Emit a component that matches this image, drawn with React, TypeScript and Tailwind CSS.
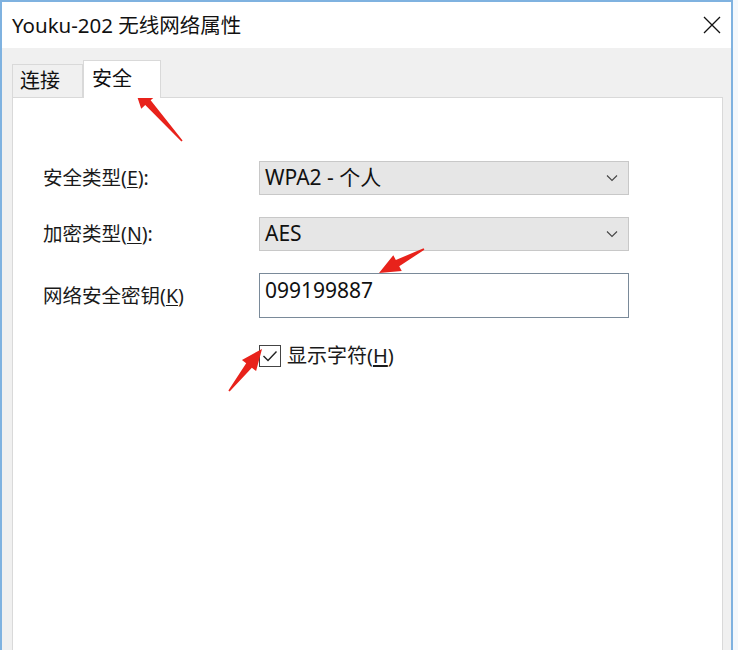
const font = {
  fontFamily: '"Noto Sans", "Noto Sans CJK SC", sans-serif',
};

type Pt = [number, number];

// tapered red annotation arrow, thin at the tail, head at the tip
const arrowPoints = (tail: Pt, tip: Pt) => {
  const dx = tip[0] - tail[0];
  const dy = tip[1] - tail[1];
  const len = Math.hypot(dx, dy);
  const ux = dx / len;
  const uy = dy / len;
  const nx = -uy;
  const ny = ux;
  const headLen = 21;
  const base: Pt = [tip[0] - ux * headLen, tip[1] - uy * headLen];
  const at = (p: Pt, w: number): string =>
    `${p[0] + nx * w},${p[1] + ny * w}`;
  return [
    at(tail, 0.8),
    at(base, 3.6),
    at(base, 9),
    `${tip[0]},${tip[1]}`,
    at(base, -9),
    at(base, -3.6),
    at(tail, -0.8),
  ].join(' ');
};

const arrows: { tail: Pt; tip: Pt }[] = [
  { tail: [182, 141], tip: [134, 87] },
  { tail: [424, 249], tip: [379, 273] },
  { tail: [229, 391], tip: [262, 349] },
];

const Chevron = () => (
  <svg width="12" height="8" viewBox="0 0 12 8" className="mr-[10px]">
    <path d="M1 1.5 L6 6.5 L11 1.5" fill="none" stroke="#444" strokeWidth="1.1" />
  </svg>
);

const Select = ({ value }: { value: string }) => (
  <div className="flex h-[34px] w-[370px] items-center justify-between border border-[#c8c8c8] bg-[#e6e6e6] pl-[5px]">
    <span className="text-[21px] text-[#111]">{value}</span>
    <Chevron />
  </div>
);

const Label = ({ text, keyChar, colon }: { text: string; keyChar: string; colon?: boolean }) => (
  <div className="w-[216px] text-[19.5px] text-[#1a1a1a]">
    {text}(<span className="underline underline-offset-2">{keyChar}</span>){colon ? ':' : ''}
  </div>
);

export default function App() {
  return (
    <div className="relative h-[650px] w-[738px] overflow-hidden bg-[#f4f8fc]" style={font}>
      <div className="flex h-[660px] w-[733px] flex-col border-x-2 border-t-2 border-[#7fb2e0] bg-[#f0f0f0]">
        <div className="flex h-[46px] shrink-0 items-center justify-between bg-white pl-[10px] pr-[10px]">
          <span className="text-[20.5px] text-[#111]">Youku-202 无线网络属性</span>
          <svg width="18" height="18" viewBox="0 0 18 18">
            <path d="M1 1 L17 17 M17 1 L1 17" stroke="#111" strokeWidth="1.3" />
          </svg>
        </div>

        <div className="flex flex-1 flex-col pl-[10px] pr-[8px] pt-[12px]">
          <div className="flex items-end">
            <div className="flex h-[33px] w-[71px] items-center border border-b-0 border-[#d9d9d9] bg-[#f0f0f0] pl-[7px] text-[20px] text-[#111]">
              连接
            </div>
            <div className="relative z-10 -mb-px flex h-[38px] w-[78px] items-center border border-b-0 border-[#d9d9d9] bg-white pb-[2px] pl-[8px] text-[20px] text-[#111]">
              安全
            </div>
          </div>

          <div className="flex-1 border border-[#d9d9d9] bg-white pl-[30px] pt-[63px]">
            <div className="flex flex-col gap-[22px]">
              <div className="flex items-center">
                <Label text="安全类型" keyChar="E" colon />
                <Select value="WPA2 - 个人" />
              </div>
              <div className="flex items-center">
                <Label text="加密类型" keyChar="N" colon />
                <Select value="AES" />
              </div>
              <div className="flex items-center">
                <Label text="网络安全密钥" keyChar="K" />
                <div className="h-[45px] w-[370px] border border-[#7a8a99] bg-white pl-[5px] pt-[1px] text-[21px] text-[#111]">
                  099199887
                </div>
              </div>
            </div>

            <div className="ml-[216px] mt-[23px] flex items-center gap-[6px]">
              <div className="flex h-[22px] w-[22px] items-center justify-center border border-[#444] bg-white">
                <svg width="16" height="12" viewBox="0 0 16 12">
                  <path d="M1.5 6 L6 10.5 L14.5 1.5" fill="none" stroke="#222" strokeWidth="1.4" />
                </svg>
              </div>
              <span className="text-[20px] text-[#1a1a1a]">
                显示字符(<span className="underline underline-offset-2">H</span>)
              </span>
            </div>
          </div>
        </div>
      </div>

      <svg className="pointer-events-none absolute left-0 top-0" width="738" height="650">
        {arrows.map((a, i) => (
          <polygon key={i} points={arrowPoints(a.tail, a.tip)} fill="#e8221b" />
        ))}
      </svg>
    </div>
  );
}
